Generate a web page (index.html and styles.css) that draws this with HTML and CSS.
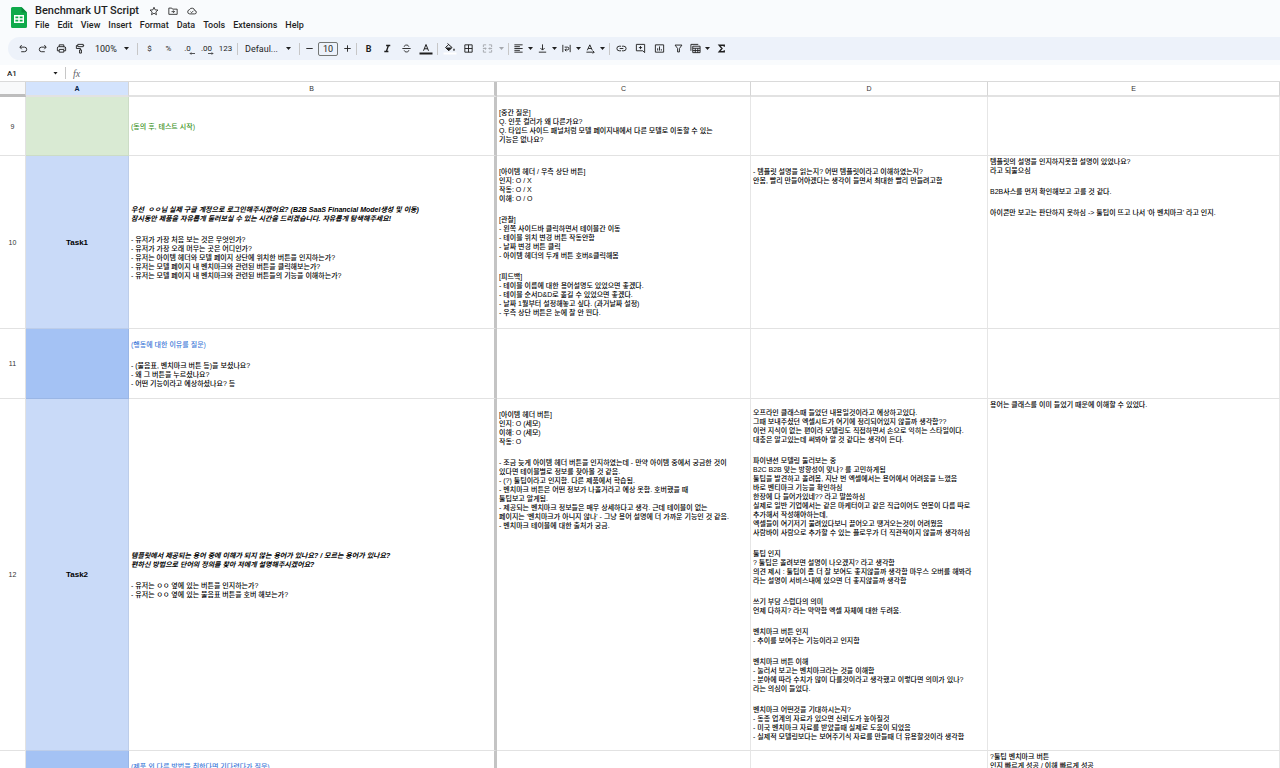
FILE: index.html
```
<!DOCTYPE html>
<html lang="ko">
<head>
  <meta charset="UTF-8">
  <title>Benchmark UT Script</title>
  <link rel="stylesheet" href="styles.css">
</head>
<body>
  <header class="top">
    <svg class="logo" viewBox="0 0 16 21">
      <path d="M1.500 0H10.500L16 5.500V19.500A1.500 1.500 0 0 1 14.500 21H1.500A1.500 1.500 0 0 1 0 19.500V1.500A1.500 1.500 0 0 1 1.500 0Z" fill="#0faa4b"/>
      <path d="M10.500 0L16 5.500H10.500Z" fill="#0b8a3c"/>
      <path d="M3 8H13V16H3ZM4.400 9.400V11.300H7.300V9.400ZM8.700 9.400V11.300H11.600V9.400ZM4.400 12.700V14.600H7.300V12.700ZM8.700 12.700V14.600H11.600V12.700Z" fill="#fff" fill-rule="evenodd"/>
    </svg>
    <div class="doc">
      <div class="title-row">
        <h1 class="title">Benchmark UT Script</h1>
        <button class="title-btn" aria-label="Star">
          <svg viewBox="0 0 24 24"><path d="M12 3l2.700 6.200 6.800.6-5.100 4.500 1.500 6.600L12 17.400 6.100 20.900l1.500-6.600-5.100-4.500 6.800-.6z" class="line"/></svg>
        </button>
        <button class="title-btn" aria-label="Move">
          <svg viewBox="0 0 24 24"><path d="M2 5h7l2 2.500h11V20H2zM8.500 13.500h7M12.500 10.500l3 3-3 3" class="line"/></svg>
        </button>
        <button class="title-btn" aria-label="Saved to Drive">
          <svg viewBox="0 0 24 24"><path d="M6.500 19a5 5 0 0 1-.8-9.900A6.800 6.800 0 0 1 18.600 11a4 4 0 0 1-.4 8zM8.500 13.500l2.500 2.500 4.500-4.500" class="line"/></svg>
        </button>
      </div>
      <nav class="menu">
        <button>File</button>
        <button>Edit</button>
        <button>View</button>
        <button>Insert</button>
        <button>Format</button>
        <button>Data</button>
        <button>Tools</button>
        <button>Extensions</button>
        <button>Help</button>
      </nav>
    </div>
  </header>

  <div class="toolbar-wrap">
    <div class="toolbar">
      <button class="tool" aria-label="Undo"><svg viewBox="0 0 24 24"><path d="M8 4.500L4 9l4 4.500M4.500 9H14a5 5 0 0 1 0 10H7" class="line"/></svg></button>
      <button class="tool" aria-label="Redo"><svg viewBox="0 0 24 24"><path d="M16 4.500L20 9l-4 4.500M19.500 9H10a5 5 0 0 0 0 10h7" class="line"/></svg></button>
      <button class="tool" aria-label="Print"><svg viewBox="0 0 24 24"><path d="M7 8V4h10v4M7 17H3v-6a3 3 0 0 1 3-3h12a3 3 0 0 1 3 3v6h-4M7 14h10v6H7zM17 11h1.500" class="line"/></svg></button>
      <button class="tool" aria-label="Paint format"><svg viewBox="0 0 24 24"><path d="M6 3h12v5H6zM6 5.500H3V12h9v3M10 15h4v7h-4zM18 5.500h2" class="line"/></svg></button>
      <label class="pick zoom">
        <select aria-label="Zoom"><option>100%</option></select>
        <span class="caret"></span>
      </label>
      <span class="sep"></span>
      <button class="tool">$</button>
      <button class="tool">%</button>
      <button class="tool decimal" aria-label="Decrease decimal places">.0<svg viewBox="0 0 8 4"><path d="M8 2H1.500M3 .500L1.500 2 3 3.500" class="thin"/></svg></button>
      <button class="tool decimal" aria-label="Increase decimal places">.00<svg viewBox="0 0 8 4"><path d="M0 2h6.500M5 .500L6.500 2 5 3.500" class="thin"/></svg></button>
      <button class="tool">123</button>
      <span class="sep"></span>
      <label class="pick font">
        <select aria-label="Font"><option>Defaul...</option></select>
        <span class="caret"></span>
      </label>
      <span class="sep"></span>
      <button class="tool step" aria-label="Decrease font size"><svg viewBox="0 0 24 24"><path d="M5 12h14" class="line"/></svg></button>
      <input class="size" type="text" value="10" aria-label="Font size">
      <button class="tool step" aria-label="Increase font size"><svg viewBox="0 0 24 24"><path d="M5 12h14M12 5v14" class="line"/></svg></button>
      <span class="sep"></span>
      <button class="tool bold">B</button>
      <button class="tool" aria-label="Italic"><svg viewBox="0 0 24 24"><path d="M9 5.500h9M5 18.500h9M14 5.500l-4.500 13" class="heavy"/></svg></button>
      <button class="tool" aria-label="Strikethrough"><svg viewBox="0 0 24 24"><path d="M3 12h18M17 8c-.5-2.500-2.500-3.500-5-3.500S7 5.500 7 8M7 16c.5 2.500 2.500 3.500 5 3.500s5-1 5-3.500" class="line"/></svg></button>
      <button class="tool" aria-label="Text color"><svg class="wide" viewBox="0 0 28 24"><path d="M9 15.500L14 3l5 12.500M10.800 11.500h6.400" class="line"/><path d="M1 19h26v4H1z"/></svg></button>
      <span class="sep"></span>
      <button class="tool" aria-label="Fill color"><svg class="wide" viewBox="0 0 28 24"><path d="M9 1l9 8-6.500 6.500L5 9l6-5.500" class="line"/><path d="M6 9h12l-6.500 6.500zM22 10.500c2 2.500 2.500 5-.0 5s-2-2.500 0-5z"/><path d="M1 19h26v4H1z" fill="#fff"/></svg></button>
      <button class="tool" aria-label="Borders"><svg viewBox="0 0 24 24"><path d="M4 4h16v16H4zM12 4v16M4 12h16" class="line"/></svg></button>
      <button class="tool off" aria-label="Merge cells" disabled><svg viewBox="0 0 24 24"><path d="M9 4H3v5M3 15v5h6M15 4h6v5M21 15v5h-6M2 12h7M6.500 9.500L9 12l-2.500 2.500M22 12h-7M17.500 9.500L15 12l2.500 2.500" class="line"/></svg></button>
      <button class="drop off" aria-label="Merge options" disabled><span class="caret"></span></button>
      <span class="sep"></span>
      <button class="tool combo" aria-label="Horizontal align"><svg viewBox="0 0 24 24"><path d="M3 4h18M3 8h12M3 12h18M3 16h12M3 20h18" class="line"/></svg><span class="caret"></span></button>
      <button class="tool combo" aria-label="Vertical align"><svg viewBox="0 0 24 24"><path d="M12 3v12M7.500 11l4.500 4.500L16.500 11M4 20h16" class="line"/></svg><span class="caret"></span></button>
      <button class="tool combo" aria-label="Text wrapping"><svg viewBox="0 0 24 24"><path d="M4 4v16M20 4v16M8 9h6a3 3 0 0 1 0 6H9M11.500 12L8.500 15l3 3" class="line"/></svg><span class="caret"></span></button>
      <button class="tool combo" aria-label="Text rotation"><svg viewBox="0 0 24 24"><path d="M5 16L10.500 4 16 16M7 12h7M3 20h17M17 17l3 3-3 3" class="line"/></svg><span class="caret"></span></button>
      <span class="sep"></span>
      <button class="tool" aria-label="Insert link"><svg viewBox="0 0 24 24"><path d="M11 7H7a5 5 0 0 0 0 10h4M13 7h4a5 5 0 0 1 0 10h-4M8 12h8" class="line"/></svg></button>
      <button class="tool" aria-label="Insert comment"><svg viewBox="0 0 24 24"><path d="M3 3h18v18l-4-4H3zM12 6.500v7M8.500 10h7" class="line"/></svg></button>
      <button class="tool" aria-label="Insert chart"><svg viewBox="0 0 24 24"><path d="M3 4h18v16H3zM8 16.500v-5M12 16.500v-9M16 16.500v-3" class="line"/></svg></button>
      <button class="tool" aria-label="Create a filter"><svg viewBox="0 0 24 24"><path d="M4.500 4.500h15L14 12v7.500h-4V12z" class="line"/></svg></button>
      <button class="tool combo" aria-label="Filter views"><svg viewBox="0 0 24 24"><path d="M2 17V3h16M6 7h16v14H6zM6 11.500h16M6 16.500h16M11.500 11.500V21M17 11.500V21" class="line"/></svg><span class="caret"></span></button>
      <button class="tool" aria-label="Functions"><svg viewBox="0 0 24 24"><path d="M18 8V5H7l6 7-6 7h11v-3" class="heavy"/></svg></button>
    </div>
  </div>

  <div class="formula-bar">
    <label class="name-box">
      <input type="text" value="A1" aria-label="Name box">
      <span class="caret"></span>
    </label>
    <span class="sep"></span>
    <label class="fx" for="formula">fx</label>
    <input class="formula" id="formula" type="text">
  </div>

  <main class="sheet">
    <table class="grid">
      <colgroup>
        <col class="col-num">
        <col class="col-a">
        <col class="col-b">
        <col class="col-c">
        <col class="col-d">
        <col class="col-e">
      </colgroup>
      <thead>
        <tr>
          <th class="corner"></th>
          <th class="selected">A</th>
          <th class="frozen">B</th>
          <th>C</th>
          <th>D</th>
          <th>E</th>
        </tr>
      </thead>
      <tbody>
        <tr class="row-9">
          <th>9</th>
          <td class="green"></td>
          <td class="frozen"><p class="note-green">(동의 후, 테스트 시작)</p></td>
          <td>
            <p>[중간 질문]<br>Q. 인풋 컬러가 왜 다른가요?<br>Q. 타입드 사이드 패널처럼 모델 페이지내에서 다른 모델로 이동할 수 있는<br>기능은 없나요?</p>
          </td>
          <td></td>
          <td></td>
        </tr>
        <tr class="row-10">
          <th>10</th>
          <td class="blue task">Task1</td>
          <td class="frozen">
            <p class="question">우선&nbsp; ㅇㅇ님 실제 구글 계정으로 로그인해주시겠어요? (B2B SaaS Financial Model생성 및 이동)<br>잠시동안 제품을 자유롭게 둘러보실 수 있는 시간을 드리겠습니다. 자유롭게 탐색해주세요!</p>
            <p>- 유저가 가장 처음 보는 것은 무엇인가?<br>- 유저가 가장 오래 머무는 곳은 어디인가?<br>- 유저는 아이템 헤더와 모델 페이지 상단에 위치한 버튼을 인지하는가?<br>- 유저는 모델 페이지 내 벤치마크와 관련된 버튼을 클릭해보는가?<br>- 유저는 모델 페이지 내 벤치마크와 관련된 버튼들의 기능을 이해하는가?</p>
          </td>
          <td>
            <p>[아이템 헤더 / 우측 상단 버튼]<br>인지: O / X<br>작동: O / X<br>이해: O / O</p>
            <p>[관찰]<br>- 왼쪽 사이드바 클릭하면서 테이블간 이동<br>- 테이블 위치 변경 버튼 작동안함<br>- 날짜 변경 버튼 클릭<br>- 아이템 헤더의 두개 버튼 호버&amp;클릭해봄</p>
            <p>[피드백]<br>- 테이블 이름에 대한 용어설명도 있었으면 좋겠다.<br>- 테이블 순서D&amp;D로 옮길 수 있었으면 좋겠다.<br>- 날짜 1월부터 설정해놓고 싶다. (과거날짜 설정)<br>- 우측 상단 버튼은 눈에 잘 안 띈다.</p>
          </td>
          <td class="top-blank">
            <p>- 템플릿 설명을 읽는지? 어떤 템플릿이라고 이해하였는지?<br>안봄, 빨리 만들어야겠다는 생각이 들면서 최대한 빨리 만들려고함</p>
          </td>
          <td class="top-cell">
            <p>템플릿의 설명을 인지하지못함 설명이 있었나요?<br>라고 되물으심</p>
            <p>B2B사스를 먼저 확인해보고 고를 것 같다.</p>
            <p>아이콘만 보고는 판단하지 못하심 -&gt; 툴팁이 뜨고 나서 '아 벤치마크' 라고 인지.</p>
          </td>
        </tr>
        <tr class="row-11">
          <th>11</th>
          <td class="blue-dark"></td>
          <td class="frozen">
            <p class="note-blue">(행동에 대한 이유를 질문)</p>
            <p>- (물음표, 벤치마크 버튼 등)을 보셨나요?<br>- 왜 그 버튼을 누르셨나요?<br>- 어떤 기능이라고 예상하셨나요? 등</p>
          </td>
          <td></td>
          <td></td>
          <td></td>
        </tr>
        <tr class="row-12">
          <th>12</th>
          <td class="blue task">Task2</td>
          <td class="frozen">
            <p class="question">템플릿에서 제공되는 용어 중에 이해가 되지 않는 용어가 있나요? / 모르는 용어가 있나요?<br>편하신 방법으로 단어의 정의를 찾아 저에게 설명해주시겠어요?</p>
            <p>- 유저는 ㅇㅇ 옆에 있는 버튼을 인지하는가?<br>- 유저는 ㅇㅇ 옆에 있는 물음표 버튼을 호버 해보는가?</p>
          </td>
          <td class="top-blank">
            <p>[아이템 헤더 버튼]<br>인지: O (세모)<br>이해: O (세모)<br>작동: O</p>
            <p>- 조금 늦게 아이템 헤더 버튼을 인지하였는데 - 만약 아이템 중에서 궁금한 것이<br>있다면 테이블별로 정보를 찾아볼 것 같음.<br>- (?) 툴팁이라고 인지함. 다른 제품에서 학습됨.<br>- 벤치마크 버튼은 어떤 정보가 나올거라고 예상 못함. 호버했을 때<br>툴팁보고 알게됨.<br>- 제공되는 벤치마크 정보들은 매우 상세하다고 생각. 근데 테이블이 없는<br>페이지는 '벤치마크가 아니지 않나' - 그냥 용어 설명에 더 가까운 기능인 것 같음.<br>- 벤치마크 테이블에 대한 출처가 궁금.</p>
          </td>
          <td>
            <p>오프라인 클래스때 들었던 내용일것이라고 예상하고있다.<br>그때 보내주셨던 엑셀시트가 여기에 정리되어있지 않을까 생각함??<br>이런 지식이 없는 편이라 모델링도 직접하면서 손으로 익히는 스타일이다.<br>대충은 알고있는데 써봐야 알 것 같다는 생각이 든다.</p>
            <p>파이낸션 모델링 둘러보는 중<br>B2C B2B 맞는 방향성이 맞나? 를 고민하게됨<br>툴팁을 발견하고 올려봄, 지난 번 엑셀에서는 용어에서 어려움을 느꼈음<br>바로 벤티마크 기능을 확인하심<br>한장에 다 들어가있네?? 라고 말씀하심<br>실제로 일반 기업에서는 같은 마케터이고 같은 직급이어도 연봉이 다름 따로<br>추가해서 작성해야하는데,<br>엑셀들이 여기저기 물려있다보니 끌어오고 땡겨오는것이 어려웠음<br>사람바이 사람으로 추가할 수 있는 플로우가 더 직관적이지 않을까 생각하심</p>
            <p>툴팁 인지<br>? 툴팁은 올려보면 설명이 나오겠지? 라고 생각함<br>의견 제시 : 툴팁이 좀 더 잘 보여도 좋지않을까 생각함 마우스 오버를 해봐라<br>라는 설명이 서비스내에 있으면 더 좋지않을까 생각함</p>
            <p>쓰기 부담 스럽다의 의미<br>언제 다하지? 라는 막막함 엑셀 자체에 대한 두려움.</p>
            <p>벤치마크 버튼 인지<br>- 추이를 보여주는 기능이라고 인지함</p>
            <p>벤치마크 버튼 이해<br>- 눌러서 보고는 벤치마크라는 것을 이해함<br>- 분야에 따라 수치가 많이 다를것이라고 생각했고 이렇다면 의미가 있나?<br>라는 의심이 들었다.</p>
            <p>벤치마크 어떤것을 기대하시는지?<br>- 동종 업계의 자료가 있으면 신뢰도가 높아질것<br>- 미국 벤치마크 자료를 받았을때 실제로 도움이 되었음<br>- 실제적 모델링보다는 보여주기식 자료를 만들때 더 유용할것이라 생각함</p>
          </td>
          <td class="top-cell"><p>용어는 클래스를 이미 들었기 때문에 이해할 수 있었다.</p></td>
        </tr>
        <tr class="row-13">
          <th></th>
          <td class="blue-dark"></td>
          <td class="frozen top-blank"><p class="note-blue">(제품 외 다른 방법을 취한다면 기다렸다가 질문)</p></td>
          <td></td>
          <td></td>
          <td class="top-cell"><p>?툴팁 벤치마크 버튼<br>인지 빠르게 성공 / 이해 빠르게 성공</p></td>
        </tr>
      </tbody>
    </table>
  </main>
</body>
</html>
```
FILE: styles.css
```
* {
  box-sizing: border-box;
}

body {
  display: flex;
  flex-direction: column;
  height: 100vh;
  margin: 0;
  overflow: hidden;
  background: #fff;
  color: #1f1f1f;
  font-family: Roboto, "Noto Sans CJK KR", sans-serif;
  font-size: 9px;
}

button,
input,
select {
  margin: 0;
  padding: 0;
  border: 0;
  background: none;
  color: inherit;
  font: inherit;
}

button {
  cursor: pointer;
}

svg {
  display: block;
  fill: #1f1f1f;
}

.line,
.heavy,
.thin {
  fill: none;
  stroke: #1f1f1f;
  stroke-width: 2;
}

.heavy {
  stroke-width: 3;
}

.thin {
  stroke-width: 1;
}

/* title and menus */
.top {
  display: flex;
  gap: 8px;
  padding: 4px 11px 5px;
  background: #f9fbfd;
}

.logo {
  width: 16px;
  height: 21px;
  margin-top: 3px;
}

.title-row {
  display: flex;
  align-items: center;
  height: 14px;
}

.title {
  margin: 0 5px 0 0;
  font-size: 11px;
  font-weight: 500;
  line-height: 14px;
}

.title-btn {
  width: 19px;
}

.title-btn svg {
  width: 10px;
  height: 10px;
  margin: 0 auto;
}

.menu {
  display: flex;
  gap: 8px;
  height: 14px;
  font-weight: 500;
}

.menu button {
  line-height: 14px;
}

/* toolbar */
.toolbar-wrap {
  padding: 0 0 5px 8px;
  background: #f9fbfd;
}

.toolbar {
  display: flex;
  align-items: center;
  height: 23px;
  padding-left: 6px;
  border-radius: 12px 0 0 12px;
  background: #edf2fa;
  font-size: 8px;
}

.tool {
  display: flex;
  align-items: center;
  justify-content: center;
  width: 19px;
  height: 19px;
}

.tool svg {
  width: 11px;
  height: 11px;
}

.tool .wide {
  width: 14px;
  height: 12px;
}

.bold {
  font-size: 9px;
  font-weight: 700;
}

.step {
  width: 14px;
}

.decimal {
  position: relative;
}

.tool.decimal svg {
  position: absolute;
  right: 2px;
  bottom: 3px;
  width: 6px;
  height: 3px;
}

.combo {
  justify-content: flex-start;
  gap: 4px;
  width: 24px;
  padding-left: 2px;
}

.drop {
  width: 9px;
}

.off {
  opacity: 0.35;
}

.caret {
  display: block;
  flex: none;
  width: 5px;
  height: 3px;
  background: #1f1f1f;
  clip-path: polygon(0 0, 100% 0, 50% 100%);
}

.drop .caret {
  margin: 0 auto;
}

.pick {
  position: relative;
  display: flex;
  align-items: center;
}

.pick select {
  width: 100%;
  padding-left: 5px;
  appearance: none;
  font-size: 9px;
}

.pick .caret {
  position: absolute;
  right: 6px;
}

.zoom {
  width: 45px;
}

.font {
  width: 57px;
}

.sep {
  flex: none;
  width: 1px;
  height: 12px;
  margin: 0 2px;
  background: #c7c7c7;
}

.size {
  width: 20px;
  height: 14px;
  margin: 0 2px;
  border: 1px solid #747775;
  border-radius: 2px;
  font-size: 9px;
  text-align: center;
}

/* formula bar */
.formula-bar {
  display: flex;
  align-items: center;
  height: 17px;
  border-bottom: 1px solid #dadada;
}

.name-box {
  display: flex;
  align-items: center;
  width: 63px;
  padding: 0 5px 0 7px;
}

.name-box input {
  flex: 1;
  min-width: 0;
  font-size: 8px;
  font-weight: 500;
}

.fx {
  padding: 0 8px 0 5px;
  color: #5f6368;
  font-family: "Liberation Serif", serif;
  font-size: 10px;
  font-style: italic;
}

.formula {
  flex: 1;
}

/* grid */
.sheet {
  flex: 1;
  min-height: 0;
  overflow: hidden;
}

.grid {
  width: 100%;
  border-collapse: separate;
  border-spacing: 0;
  table-layout: fixed;
  color: #000;
  font-family: "Liberation Sans", "Noto Sans CJK KR", sans-serif;
  font-size: 7px;
  line-height: 9px;
}

.col-num {
  width: 26px;
}

.col-a {
  width: 103px;
}

.col-b {
  width: 368px;
}

.col-c {
  width: 254px;
}

.col-d {
  width: 237px;
}

th {
  padding: 0;
  border-right: 1px solid #d5d5d5;
  border-bottom: 1px solid #e2e2e2;
  color: #333;
  font-weight: 400;
}

thead th {
  height: 15px;
  border-bottom: 2px solid #e2e2e2;
}

tbody th {
  border-right-color: #e2e2e2;
}

td {
  padding: 0 2px;
  border-right: 1px solid #e6e6e6;
  border-bottom: 1px solid #e2e2e2;
  font-weight: 500;
  vertical-align: middle;
  white-space: nowrap;
}

.corner {
  border-right: 1px solid #d5d5d5;
  border-bottom: 3px solid #bdbdbd;
  background: #f8f9fa;
}

.selected {
  background: #d3e3fd;
  color: #041e49;
  font-weight: 700;
}

.frozen {
  border-right: 3px solid #c4c4c4;
}

td p {
  margin: 0;
}

td p + p {
  margin-top: 12px;
}

.top-cell {
  padding-top: 1px;
  vertical-align: top;
}

.top-blank {
  padding-top: 11px;
  vertical-align: top;
}

.row-9 {
  height: 59px;
}

.row-10 {
  height: 173px;
}

.row-11 {
  height: 70px;
}

.row-12 {
  height: 352px;
}

.row-13 {
  height: 70px;
}

.green {
  background: #d9ead3;
}

.blue {
  background: #c9daf8;
}

.blue-dark {
  background: #a4c2f4;
}

.green,
.blue,
.blue-dark {
  border-color: rgba(0, 0, 0, 0.06);
}

.task {
  font-size: 8px;
  font-weight: 700;
  text-align: center;
}

.question {
  font-style: italic;
  font-weight: 700;
}

.note-green {
  color: #38911d;
}

.note-blue {
  color: #3c78d8;
}
```
